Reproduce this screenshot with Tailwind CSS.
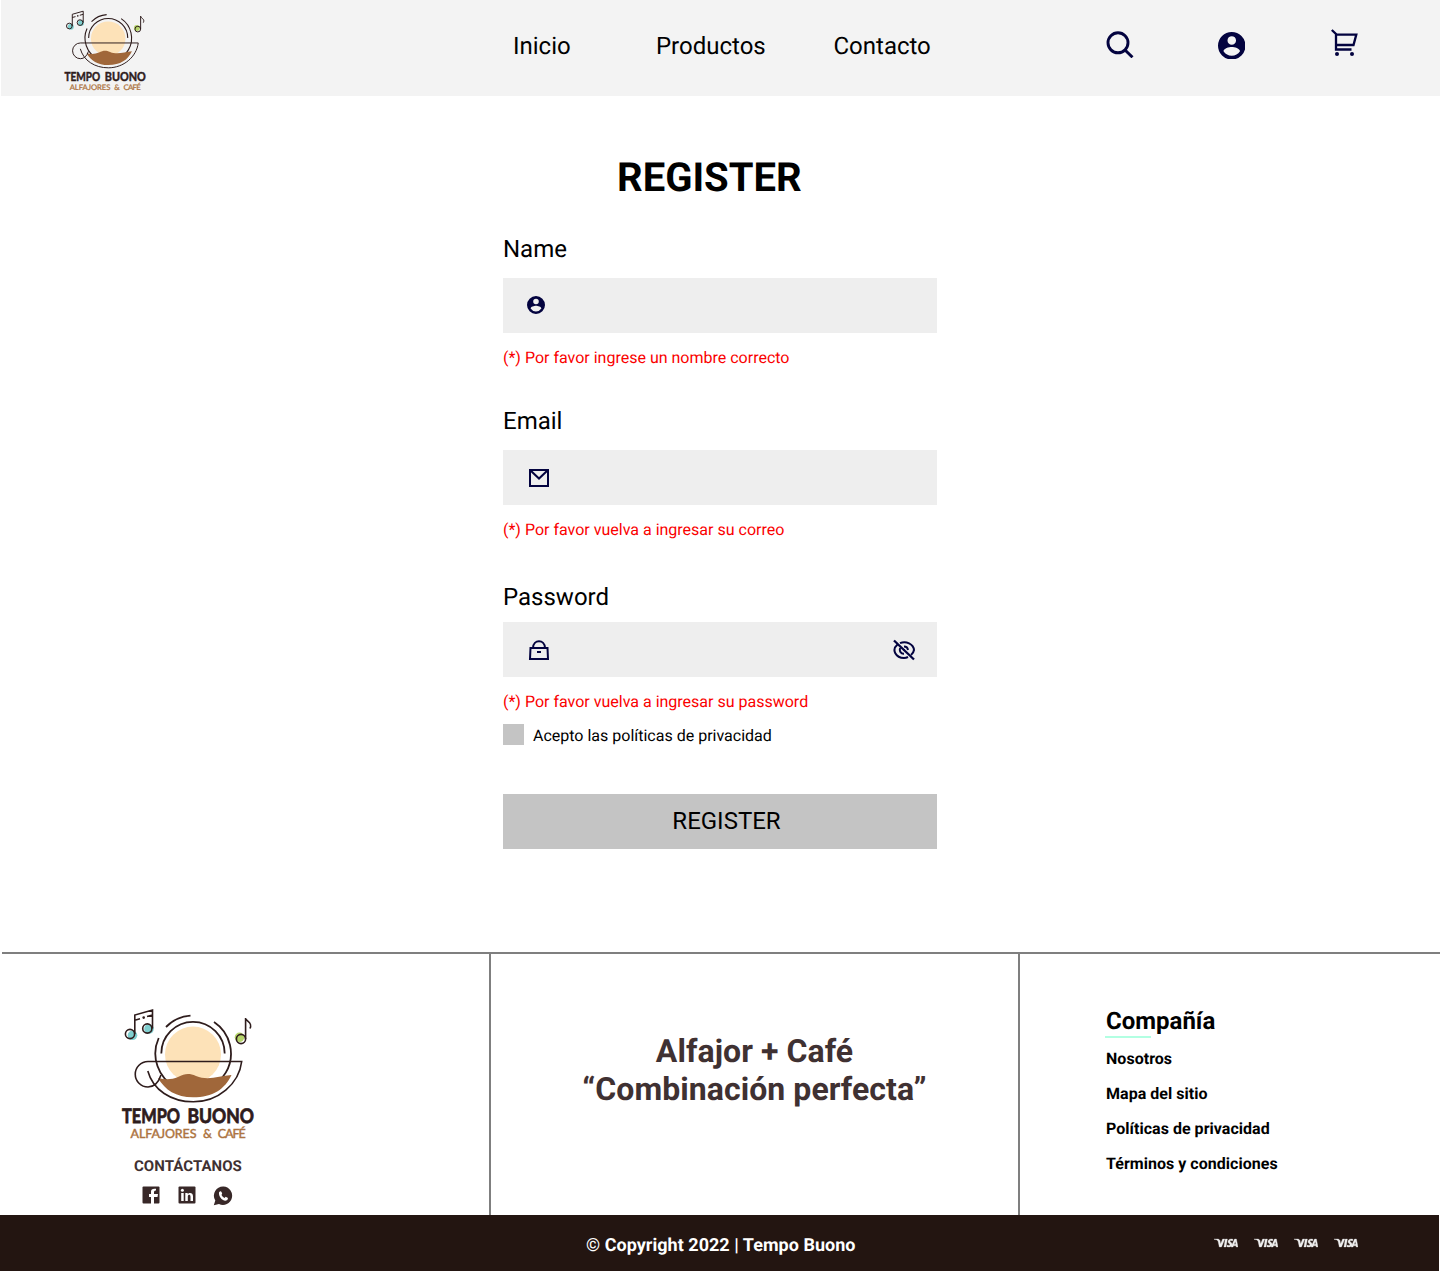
<!DOCTYPE html>
<html lang="es">
<head>
<meta charset="utf-8">
<title>Tempo Buono - Register</title>
<script src="https://cdn.jsdelivr.net/npm/@tailwindcss/browser@4"></script>
</head>
<body class="w-[1440px] h-[1272px] overflow-hidden bg-white text-black font-[Roboto,sans-serif] [text-rendering:geometricPrecision]">
<svg class="hidden">
  <symbol id="logo" viewBox="0 0 160 145">
    <circle cx="83" cy="54.500" r="28" fill="#fde2b8"/>
    <g fill="#7fcfcf"><circle cx="22.500" cy="35.300" r="4.800"/><circle cx="39" cy="29" r="4.800"/></g>
    <circle cx="129.500" cy="37.300" r="4.800" fill="#b5d56a"/>
    <path d="M48.700 38A37.800 37.800 0 1 0 104 22M51.300 53.500A31.700 31.700 0 0 1 114.700 53.500M56 27A37.800 37.800 0 0 1 80.500 15.600" fill="none" stroke="#2e1c1c" stroke-width="1.800"/>
    <path d="M48 78C56 80 62 79.500 68 77C75 73.500 79 73 86 76C98 81 109 76 121.500 75C115 89 103 97.300 83 97.300C66 97.300 55 90 48 78Z" fill="#a0673a"/>
    <g fill="none" stroke="#2e1c1c" stroke-width="1.600">
      <circle cx="20" cy="34" r="4.600"/><circle cx="37.300" cy="28.500" r="4.600"/>
      <path d="M24.800 34V15L42.500 10V28.500M24.800 20.200L30 18.800M37 16.600L42.500 15"/>
      <circle cx="131" cy="39" r="4.600"/><path d="M135.600 39V18C136 22 143 22 140 28.500"/>
      <path d="M38 61.500H131.700C129 84 108 101.800 83.300 101.800C61 101.800 43 90 37.800 71M38 61.500A12.700 12.700 0 0 0 38 87Q47 87 51 75"/>
    </g>
    <circle cx="33.700" cy="17.600" r="1.300" fill="#2e1c1c"/>
    <g font-family="Lato" font-weight="700" font-size="20" fill="#2e1c1c" stroke="#2e1c1c" stroke-width=".8">
      <text x="12" y="122.500" textLength="58" lengthAdjust="spacingAndGlyphs">TEMPO</text>
      <text x="77.500" y="122.500" textLength="66.500" lengthAdjust="spacingAndGlyphs">BUONO</text>
    </g>
    <g font-family="Lato" font-weight="500" font-size="12.500" fill="#ad7441" stroke="#ad7441" stroke-width=".35">
      <text x="20.500" y="137.500" textLength="66" lengthAdjust="spacing">ALFAJORES</text>
      <text x="93" y="137.500">&amp;</text>
      <text x="107.800" y="137.500" textLength="28" lengthAdjust="spacing">CAFÉ</text>
    </g>
  </symbol>
  <symbol id="user" viewBox="2 2 20 20">
    <path fill-rule="evenodd" d="M12 2a10 10 0 1 0 0 20 10 10 0 0 0 0-20ZM12 5a3 3 0 1 1 0 6.200A3 3 0 0 1 12 5ZM12 19.200a7.200 7.200 0 0 1-6-3.220c.03-1.990 4-3.080 6-3.080s5.970 1.090 6 3.080a7.200 7.200 0 0 1-6 3.220Z"/>
  </symbol>
  <symbol id="visa" viewBox="0 0 24 10">
    <path d="M0 1H4.500L6 2.500L6.600 6L8.600 1H10.800L7.500 9H5.300L4 3Q3 1.500 0 1.300ZM11.300 1H13.400L12 9H9.900ZM19 1.300L18.500 2.900Q16 2 16 3.200C16 4.200 18.300 4.200 18 6.500C17.600 9 15 9.500 12.800 8.700L13.200 7Q15.700 8 16 6.700C16.100 5.700 13.800 5.500 14 3.500C14.300 1 16.800.5 19 1.300ZM20.500 1H22.400L24 9H22.200L22 7.800H19.600L19 9H17ZM21.300 3.500L20.200 6.300H21.800Z" fill="#eee" stroke="#eee" stroke-width=".3" fill-rule="evenodd"/>
  </symbol>
</svg>

<header class="ml-px h-24 bg-[#f3f3f3] flex">
  <svg class="ml-[55.600px] mt-[5px] w-[98.700px] h-[89.500px] shrink-0"><use href="#logo"/></svg>
  <nav class="ml-[357.700px] flex pt-8 text-2xl leading-7 whitespace-nowrap">
    <a class="w-[143px]">Inicio</a><a class="w-[177.500px]">Productos</a><a class="w-[272.500px]">Contacto</a>
  </nav>
  <div class="flex text-[#03033f]">
    <svg class="mt-[30px] w-7 h-7 shrink-0" viewBox="0 0 28 28" fill="none" stroke="currentColor" stroke-width="2.900"><circle cx="12" cy="12.800" r="10"/><path d="M19 20L26.500 27.300"/></svg>
    <svg class="ml-[84px] mt-[31.500px] w-[27.500px] h-[27.500px] shrink-0" fill="currentColor"><use href="#user"/></svg>
    <svg class="ml-[85.500px] mt-[28px] w-7 h-[29px] shrink-0" viewBox="0 0 28 29" fill="none" stroke="currentColor" stroke-width="2.300"><path d="M.8 2L5 6V21.500H20.500M5 6.600H25.300L22.500 17H5"/><g fill="currentColor" stroke="none"><circle cx="6" cy="26" r="2"/><circle cx="21" cy="26" r="2"/></g></svg>
  </div>
</header>

<main class="ml-[503px] w-[434px] h-[856px] flex flex-col">
  <h1 class="ml-[114px] mt-[58px] h-[47px] text-[40px] leading-[47px] font-bold">REGISTER</h1>
  <label class="mt-[34px] text-2xl leading-7">Name</label>
  <div class="mt-[15px] h-[55px] shrink-0 bg-[#eee] text-[#03033f] flex px-6">
    <svg class="mt-[18px] w-[18px] h-[18px]" fill="currentColor"><use href="#user"/></svg>
  </div>
  <p class="mt-[15px] leading-5 text-[#fa0000]">(*) Por favor ingrese un nombre correcto</p>
  <label class="mt-[39px] text-2xl leading-7">Email</label>
  <div class="mt-[15px] h-[55px] shrink-0 bg-[#eee] text-[#03033f] flex px-6">
    <svg class="mt-4 w-6 h-6" viewBox="0 0 24 24" fill="none" stroke="currentColor" stroke-width="2"><path d="M3 4H21V20H3ZM3 4L12 12.500L21 4"/></svg>
  </div>
  <p class="mt-[15px] leading-5 text-[#fa0000]">(*) Por favor vuelva a ingresar su correo</p>
  <label class="mt-[43px] text-2xl leading-7">Password</label>
  <div class="mt-[11px] h-[55px] shrink-0 bg-[#eee] text-[#03033f] flex justify-between pl-6 pr-[21px]">
    <svg class="mt-4 w-6 h-6" viewBox="0 0 24 24" fill="none" stroke="currentColor" stroke-width="2"><path d="M3.500 10H20.500L21 21H3ZM6 10C6.200 1 17.800 1 18 10M10 14H14"/></svg>
    <svg class="mt-4 w-6 h-6" viewBox="0 0 24 24" fill="none" stroke="currentColor" stroke-width="2"><path d="M2 2.500L22 21.500" stroke-width="2.300"/><path d="M8 5.200C14 2.500 21.500 6 22 12Q21.500 15 19 17M5.500 6.500C-1 12 4 20 12 20Q14 20 16 19M12 8.500Q15.500 8.500 16 12M8.200 10C7 13 9 16 12 15.800M12 11V12.500"/></svg>
  </div>
  <p class="mt-[15px] leading-5 text-[#fa0000]">(*) Por favor vuelva a ingresar su password</p>
  <div class="mt-3 flex gap-[9px] h-[21px]">
    <span class="size-[21px] bg-[#c4c4c4]"></span><span class="leading-[23px]">Acepto las políticas de privacidad</span>
  </div>
  <button class="mt-[49px] h-[55px] shrink-0 bg-[#c4c4c4] text-2xl leading-[54px] pl-[13px]"><span class="block h-[55px]">REGISTER</span></button>
</main>

<footer>
  <div class="ml-[2px] h-[263px] border-t-2 border-[#7f7f7f] flex text-[#3f3132]">
    <section class="w-[487px] shrink-0 flex flex-col">
      <svg class="ml-[108px] mt-[46px] w-40 h-[145px] shrink-0"><use href="#logo"/></svg>
      <p class="ml-[132px] mt-[11px] h-5 leading-5 text-[15px] font-bold tracking-[.05px]">CONTÁCTANOS</p>
      <div class="ml-[140px] mt-[10px] flex">
        <svg class="w-[18px] h-[18px]" viewBox="0 0 18 18"><rect x=".5" y=".5" width="17" height="17" rx="1" fill="#382828"/><path d="M17 3.500H14Q12.500 3.500 12.500 5V7H16.500L16 10H12.500V17.500H9.500V10H7.500V7H9.500V4.500Q9.500 1.800 13 1.800H14.500V3.500" fill="#fff" transform="translate(-.5 1)"/></svg>
        <svg class="ml-[18px] w-[18px] h-[18px]" viewBox="0 0 18 18"><rect x=".5" y=".5" width="17" height="17" rx="1" fill="#382828"/><g fill="#fff"><circle cx="4.400" cy="4.300" r="1.500"/><path d="M3.200 7H5.700V15H3.200ZM7.300 7H9.700V8.200C11 6.200 15 6.300 15 10.200V15H12.500V10.800C12.500 8.200 9.800 8.200 9.800 10.800V15H7.300Z"/></g></svg>
        <svg class="ml-[17px] w-5 h-5" viewBox="0 0 20 20"><path d="M10.500.5A9.200 9.200 0 1 1 6 18L.8 19.300L2.300 14.500A9.200 9.200 0 0 1 10.500.5Z" fill="#382828"/><path d="M6 6.500Q7.500 4.500 8.500 6L9.200 7.500L8.500 9Q9.500 11 11.500 12L12.700 10.800L15 12Q15 14.500 12.500 14.800C8.500 14.500 5.500 10 6 6.500Z" fill="#fff"/></svg>
      </div>
    </section>
    <section class="w-[531px] shrink-0 border-x-2 border-[#7f7f7f] pt-[78px] text-center text-[32px] leading-[38px] font-bold tracking-[.06px]">
      <p>Alfajor + Café</p><p>“Combinación perfecta”</p>
    </section>
    <section class="pl-[86px] pt-[53px] text-black font-bold">
      <h2 class="text-2xl leading-7">Compañía</h2>
      <div class="-ml-px mt-px w-[46px] h-0.5 bg-[#b2ffe2]"></div>
      <ul class="mt-[3px] leading-[35px] tracking-[.03px]"><li>Nosotros</li><li>Mapa del sitio</li><li>Políticas de privacidad</li><li>Términos y condiciones</li></ul>
    </section>
  </div>
  <div class="w-[1439px] h-14 bg-[#231511] text-white flex">
    <p class="ml-[586px] w-[628px] pt-5 text-lg leading-[22px] font-bold tracking-[.03px]"><span class="font-medium">©</span> Copyright 2022 | Tempo Buono</p>
    <div class="mt-[23px] flex gap-4">
      <svg class="w-6 h-2.5"><use href="#visa"/></svg><svg class="w-6 h-2.5"><use href="#visa"/></svg><svg class="w-6 h-2.5"><use href="#visa"/></svg><svg class="w-6 h-2.5"><use href="#visa"/></svg>
    </div>
  </div>
</footer>
</body>
</html>
